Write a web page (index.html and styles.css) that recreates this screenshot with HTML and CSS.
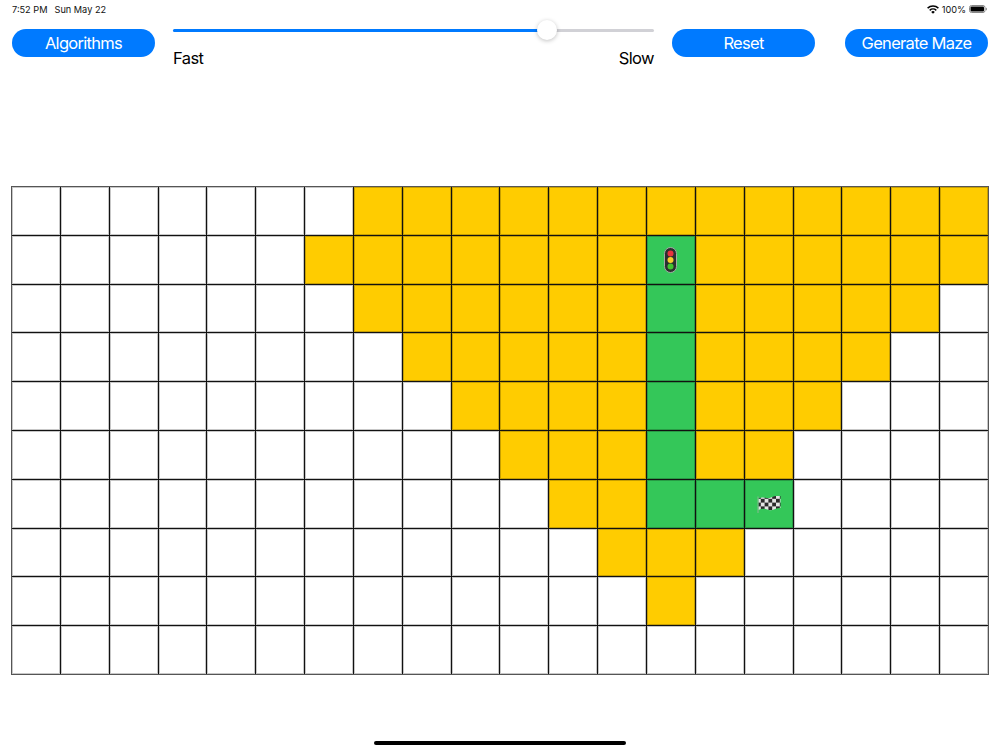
FILE: index.html
```html
<!DOCTYPE html>
<html lang="en">
<head>
<meta charset="utf-8">
<title>Maze</title>
<link rel="stylesheet" href="styles.css">
</head>
<body>
<div class="status">
  <div class="status-time"><span>7:52 PM</span><span>Sun May 22</span></div>
  <div class="status-right">
    <svg class="wifi" width="12" height="9" viewBox="0 0 12 9"><path d="M6 8.800 4.200 6.900a2.600 2.600 0 0 1 3.600 0Z" fill="#000"/><path d="M3.200 5.900a4.100 4.100 0 0 1 5.600 0l1-1.100a5.600 5.600 0 0 0-7.600 0Z" fill="#000"/><path d="M1.100 3.700a7.200 7.200 0 0 1 9.800 0l1-1.100a8.700 8.700 0 0 0-11.800 0Z" fill="#000"/></svg>
    <span>100%</span>
    <svg class="battery" width="18" height="8" viewBox="0 0 18 8"><rect x=".5" y=".5" width="15.500" height="7" rx="2" fill="none" stroke="#888"/><rect x="1.500" y="1.500" width="13.500" height="5" rx="1" fill="#000"/><rect x="16.800" y="2.800" width="1.200" height="2.500" rx=".6" fill="#999"/></svg>
  </div>
</div>
<div class="toolbar">
  <button class="btn">Algorithms</button>
  <div class="speed">
    <div class="track"><div class="fill"></div><div class="thumb"></div></div>
    <div class="labels"><span>Fast</span><span>Slow</span></div>
  </div>
  <button class="btn">Reset</button>
  <button class="btn btn-last">Generate Maze</button>
</div>
<div class="grid">
<i></i><i></i><i></i><i></i><i></i><i></i><i></i><i class="y"></i><i class="y"></i><i class="y"></i><i class="y"></i><i class="y"></i><i class="y"></i><i class="y"></i><i class="y"></i><i class="y"></i><i class="y"></i><i class="y"></i><i class="y"></i><i class="y"></i>
<i></i><i></i><i></i><i></i><i></i><i></i><i class="y"></i><i class="y"></i><i class="y"></i><i class="y"></i><i class="y"></i><i class="y"></i><i class="y"></i><i class="g"><svg class="light" width="13" height="26" viewBox="0 0 13 26"><rect x=".5" y=".5" width="12" height="25" rx="6" fill="#2b2f2e" stroke="#a4aaa6"/><circle cx="6.500" cy="6.500" r="3" fill="#e8323e"/><circle cx="6.500" cy="13" r="3" fill="#f6cc2b"/><circle cx="6.500" cy="19.500" r="3" fill="#41c22f"/></svg></i><i class="y"></i><i class="y"></i><i class="y"></i><i class="y"></i><i class="y"></i><i class="y"></i>
<i></i><i></i><i></i><i></i><i></i><i></i><i></i><i class="y"></i><i class="y"></i><i class="y"></i><i class="y"></i><i class="y"></i><i class="y"></i><i class="g"></i><i class="y"></i><i class="y"></i><i class="y"></i><i class="y"></i><i class="y"></i><i></i>
<i></i><i></i><i></i><i></i><i></i><i></i><i></i><i></i><i class="y"></i><i class="y"></i><i class="y"></i><i class="y"></i><i class="y"></i><i class="g"></i><i class="y"></i><i class="y"></i><i class="y"></i><i class="y"></i><i></i><i></i>
<i></i><i></i><i></i><i></i><i></i><i></i><i></i><i></i><i></i><i class="y"></i><i class="y"></i><i class="y"></i><i class="y"></i><i class="g"></i><i class="y"></i><i class="y"></i><i class="y"></i><i></i><i></i><i></i>
<i></i><i></i><i></i><i></i><i></i><i></i><i></i><i></i><i></i><i></i><i class="y"></i><i class="y"></i><i class="y"></i><i class="g"></i><i class="y"></i><i class="y"></i><i></i><i></i><i></i><i></i>
<i></i><i></i><i></i><i></i><i></i><i></i><i></i><i></i><i></i><i></i><i></i><i class="y"></i><i class="y"></i><i class="g"></i><i class="g"></i><i class="g"><svg class="flag" width="24" height="18" viewBox="0 0 24 18"><defs><pattern id="chk" width="7.600" height="7.600" patternUnits="userSpaceOnUse"><rect width="7.600" height="7.600" fill="#e4e4e4"/><rect width="3.800" height="3.800" fill="#2a2a2a"/><rect x="3.800" y="3.800" width="3.800" height="3.800" fill="#2a2a2a"/></pattern></defs><path d="M1.500 3.500C6 1 10 4.500 14 2.500S20 1 23.500 1V13C19 12.500 16 16 12 15S5 13 1.500 15Z" fill="url(#chk)"/><path d="M1 1.500V18" stroke="#86b892" stroke-width="1"/></svg></i><i></i><i></i><i></i><i></i>
<i></i><i></i><i></i><i></i><i></i><i></i><i></i><i></i><i></i><i></i><i></i><i></i><i class="y"></i><i class="y"></i><i class="y"></i><i></i><i></i><i></i><i></i><i></i>
<i></i><i></i><i></i><i></i><i></i><i></i><i></i><i></i><i></i><i></i><i></i><i></i><i></i><i class="y"></i><i></i><i></i><i></i><i></i><i></i><i></i>
<i></i><i></i><i></i><i></i><i></i><i></i><i></i><i></i><i></i><i></i><i></i><i></i><i></i><i></i><i></i><i></i><i></i><i></i><i></i><i></i>
</div>
<div class="home"></div>
</body>
</html>
```
FILE: styles.css
```css
* { box-sizing: border-box; }
html, body { margin: 0; padding: 0; }
body {
  width: 1000px;
  height: 750px;
  overflow: hidden;
  background: #fff;
  color: #000;
  font-family: Inter, "Liberation Sans", sans-serif;
  display: flex;
  flex-direction: column;
}
.status {
  height: 18px;
  padding: 0 13px 0 12px;
  display: flex;
  justify-content: space-between;
  align-items: center;
  font-size: 9.200px;
  color: #111;
}
.status-time { display: flex; gap: 7px; }
.status-right { display: flex; align-items: center; gap: 3px; }
.wifi { display: block; }
.battery { display: block; }
.toolbar {
  margin-top: 11px;
  padding-left: 12px;
  display: flex;
  align-items: flex-start;
  height: 157px;
}
.btn {
  width: 143px;
  height: 28px;
  border: 0;
  border-radius: 14px;
  background: #007aff;
  color: #fff;
  font-family: inherit;
  font-size: 16.500px;
  letter-spacing: -.7px;
  padding: 0;
}
.btn-last { margin-left: 30px; }
.speed {
  width: 481px;
  margin: 0 18px;
}
.track {
  position: relative;
  height: 3px;
  border-radius: 2px;
  background: #d1d1d6;
}
.fill {
  width: 374px;
  height: 3px;
  border-radius: 2px;
  background: #007aff;
}
.thumb {
  position: absolute;
  left: 364px;
  top: -9px;
  width: 20px;
  height: 20px;
  border-radius: 50%;
  background: #fff;
  box-shadow: 0 1px 4px rgba(0,0,0,.25);
}
.labels {
  margin-top: 16px;
  display: flex;
  justify-content: space-between;
  font-size: 16.500px;
  letter-spacing: -.6px;
  line-height: 20px;
}
.grid {
  margin-left: 11px;
  width: 978px;
  height: 489px;
  display: grid;
  grid-template-columns: repeat(20, 1fr);
  grid-template-rows: repeat(10, 1fr);
  gap: 1px;
  border: 1px solid #555;
  background: #111;
  background-clip: padding-box;
}
.grid i {
  display: flex;
  align-items: center;
  justify-content: center;
  background: #fff;
  min-width: 0;
  min-height: 0;
  box-shadow: inset 0 0 0 1px rgba(0,0,0,.22);
}
.grid i.y { background: #ffcc00; }
.grid i.g { background: #34c759; }
.home {
  margin: 66px auto 0;
  width: 252px;
  height: 4px;
  border-radius: 2px;
  background: #000;
}
```
